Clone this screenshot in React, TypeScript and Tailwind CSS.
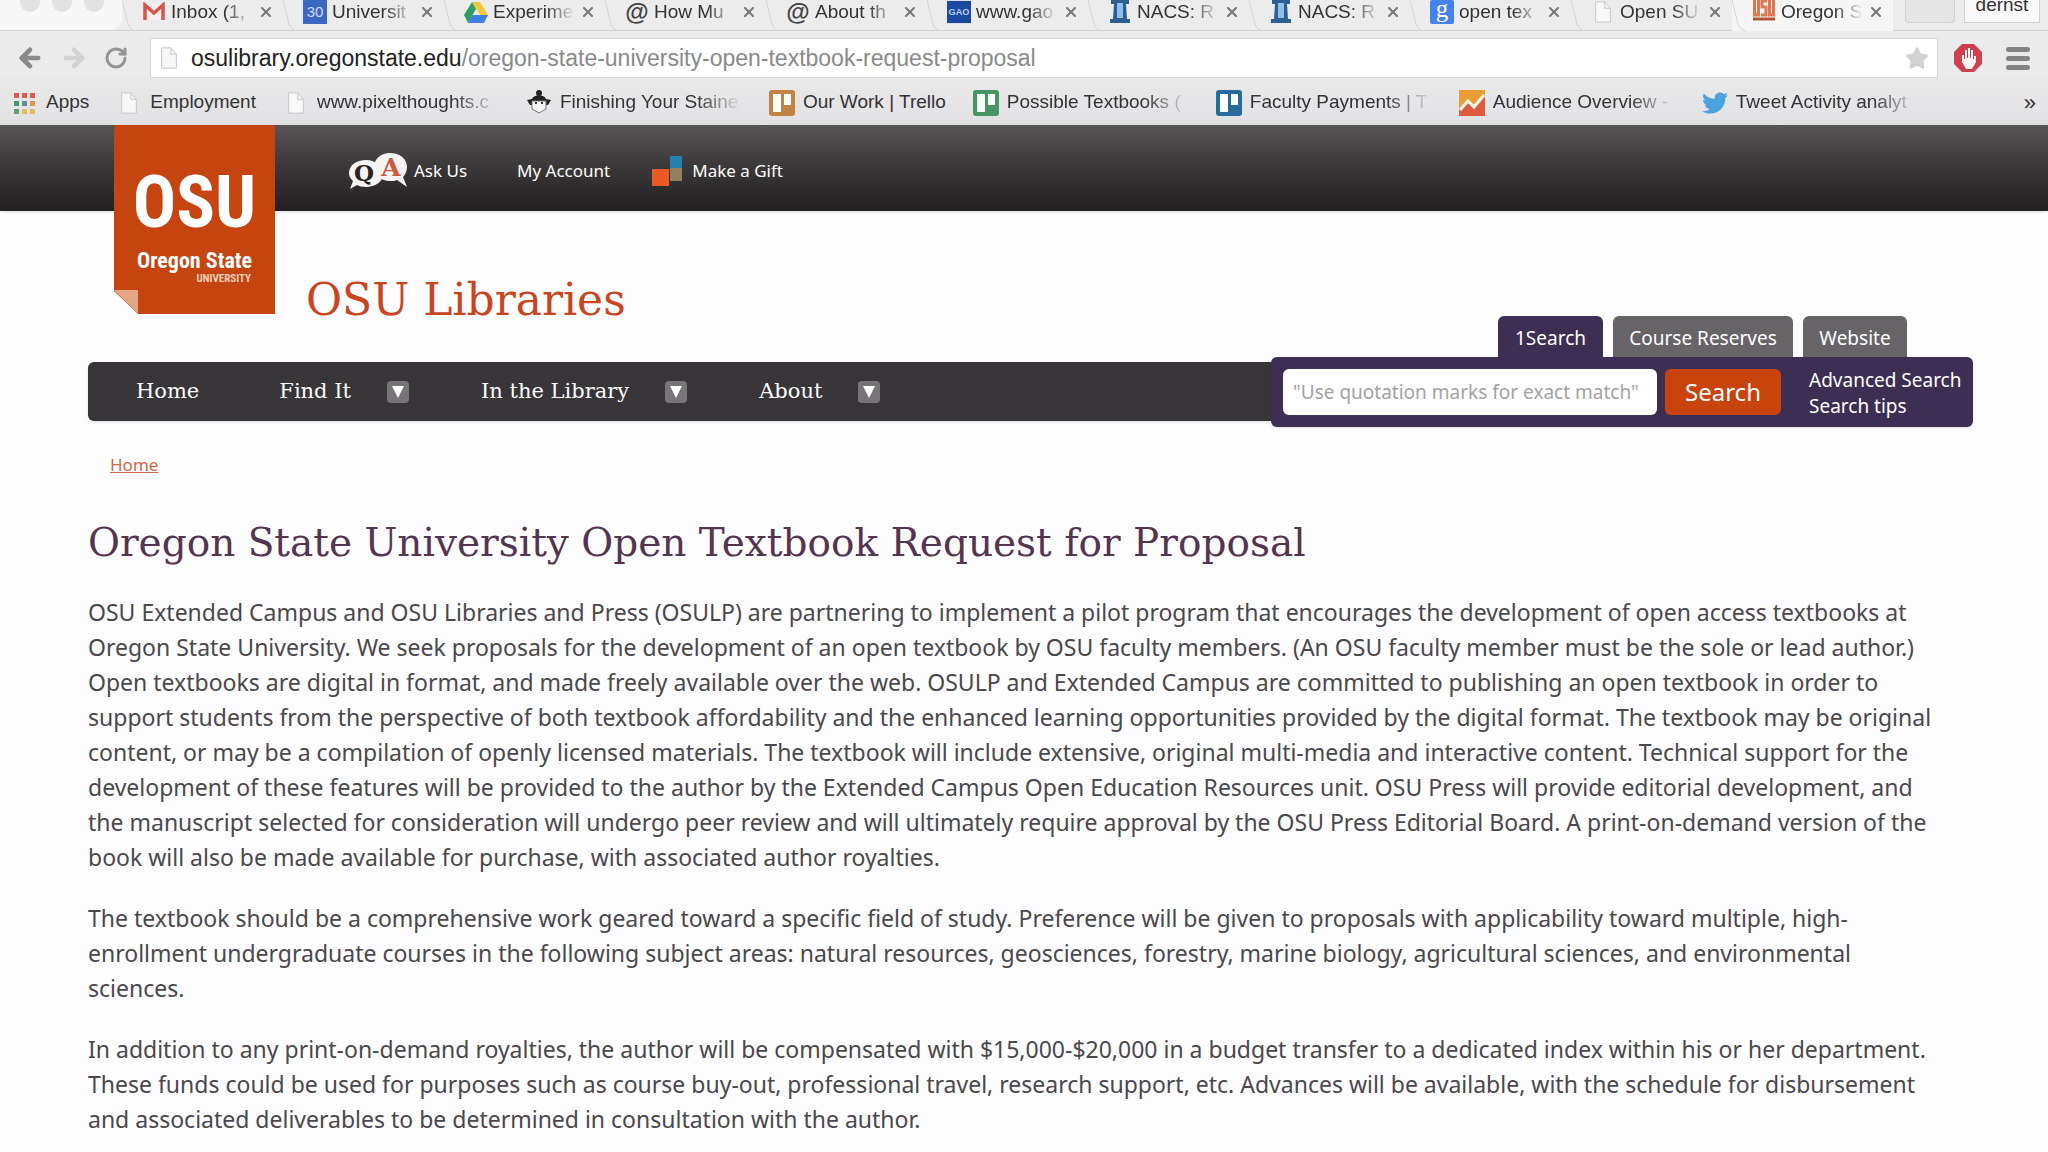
import React from "react";
import { FaTwitter, FaStar } from "react-icons/fa";
import { X, ArrowLeft, ArrowRight, RotateCw } from "lucide-react";

interface BrowserTab {
    title: string;
    icon: React.ReactNode;
    active?: boolean;
}

interface Bookmark {
    label: string;
    icon: React.ReactNode;
    faded?: boolean;
}

const PageIcon = () => (
    <svg viewBox="0 0 24 26" className="h-6 w-6">
        <path d="M4 2h10l6 7v15H4z" fill="#f7f7f7" stroke="#c4c4c4" />
        <path d="M14 2v7h6" fill="none" stroke="#c4c4c4" />
    </svg>
);

const GmailIcon = () => (
    <svg viewBox="0 0 24 18" className="h-5 w-6">
        <path d="M2 1h20v16H2z" fill="#f4f0f0" />
        <path d="M3 17V2l9 8 9-8v15" fill="none" stroke="#d5544c" strokeWidth="3.5" />
    </svg>
);

const CalendarIcon = () => (
    <svg viewBox="0 0 24 24" className="h-6 w-6">
        <rect width="24" height="24" fill="#3b67c4" />
        <text x="12" y="17" textAnchor="middle" fontSize="15" fill="#cfdcf7" fontFamily="Liberation Sans, sans-serif">30</text>
    </svg>
);

const DriveIcon = () => (
    <svg viewBox="0 0 24 22" className="h-6 w-6">
        <path d="M8 1h8l8 13h-8z" fill="#f6c73b" />
        <path d="M8 1l4 7-8 14-4-8z" fill="#2f9e63" />
        <path d="M8 14h16l-4 8H4z" fill="#3f7fe0" />
    </svg>
);

const AtIcon = () => (
    <span className="text-[24px] leading-6 font-bold text-[#444444]">@</span>
);

const GaoIcon = () => (
    <svg viewBox="0 0 26 24" className="h-6 w-[26px]">
        <rect width="26" height="24" fill="#1c49a0" />
        <text x="13" y="15" textAnchor="middle" fontSize="10" fontWeight="bold" fill="#b8cdf2" fontFamily="Liberation Sans, sans-serif">GAO</text>
    </svg>
);

const TowerIcon = () => (
    <svg viewBox="0 0 24 24" className="h-6 w-6">
        <path d="M3 0h18v4h-3l1 15h3v4H2v-4h3L6 4H3z" fill="#2d5f94" />
        <path d="M9 3h6v15H9z" fill="#8fc0ea" />
    </svg>
);

const GoogleIcon = () => (
    <svg viewBox="0 0 24 24" className="h-6 w-6">
        <rect width="24" height="24" rx="2" fill="#4483ee" />
        <text x="12" y="17" textAnchor="middle" fontSize="25" fill="#ffffff" fontFamily="Liberation Serif, serif">g</text>
    </svg>
);

const OsuIcon = () => (
    <svg viewBox="0 0 24 24" className="h-6 w-6">
        <g fill="none" stroke="#e0784c" strokeWidth="3">
            <rect x="2.5" y="-4" width="4" height="19" />
            <path d="M15 1h-5v6h4v8H9M17.500-4v19h4V-4" />
        </g>
        <path d="M1 19h22" stroke="#b0543a" strokeWidth="3" />
    </svg>
);

const AppsIcon = () => (
    <svg viewBox="0 0 26 26" className="h-[26px] w-[26px]">
        <path d="M2 3h5v5H2zM10 3h5v5h-5zM18 3h5v5h-5z" fill="#dd5a50" />
        <path d="M2 11h5v5H2z" fill="#46976a" />
        <path d="M10 11h5v5h-5z" fill="#5b90a0" />
        <path d="M18 11h5v5h-5z" fill="#d99a50" />
        <path d="M2 19h5v5H2z" fill="#5f9f6a" />
        <path d="M10 19h5v5h-5zM18 19h5v5h-5z" fill="#e2bb5c" />
    </svg>
);

const RobotIcon = () => (
    <svg viewBox="0 0 26 26" className="h-[26px] w-[26px]">
        <circle cx="13" cy="3" r="3" fill="#222222" />
        <path d="M1 10l5-1c2-5 12-5 14 0l5 1-3 5H4z" fill="#222222" />
        <path d="M6 11h14v8l-7 4-7-4z" fill="#f5f5f5" stroke="#777777" />
        <path d="M9 13h2M15 13h2" stroke="#333333" strokeWidth="2" />
    </svg>
);

const TrelloIcon = ({ color }: { color: string }) => (
    <svg viewBox="0 0 26 26" className="h-[26px] w-[26px]">
        <rect width="26" height="26" rx="3" fill={color} />
        <path d="M4 4h8v18H4zM15 4h7v11h-7z" fill="#fafffc" />
    </svg>
);

const AnalyticsIcon = () => (
    <svg viewBox="0 0 26 26" className="h-[26px] w-[26px]">
        <rect width="26" height="26" fill="#eb9d35" />
        <path d="M0 20l9-8 6 5L26 6v20H0z" fill="#dc5b3e" />
        <path d="M1 20l8-9 6 6L25 5" fill="none" stroke="#fff6ea" strokeWidth="3" />
    </svg>
);

const QaIcon = () => (
    <svg viewBox="0 0 60 38" className="h-[38px] w-[60px]">
        <path d="M18 8c9 0 17 6 17 14s-8 13-17 13c-4 0-7-1-9-2l-7 4 3-8C3 27 1 25 1 21 1 13 9 8 18 8z" fill="#f4f2f3" />
        <path d="M42 1c10 0 17 6 17 14 0 4-2 8-4 10l4 10-10-7c-2 1-4 1-7 1-9 0-16-6-16-14S33 1 42 1z" fill="#f4f2f3" />
        <text x="16" y="29" textAnchor="middle" fontSize="23" fontWeight="bold" fill="#262324" fontFamily="DejaVu Serif, serif">Q</text>
        <text x="43" y="24" textAnchor="middle" fontSize="25" fontWeight="bold" fill="#cb5a3c" fontFamily="DejaVu Serif, serif">A</text>
    </svg>
);

const GiftIcon = () => (
    <svg viewBox="0 0 32 32" className="h-8 w-8">
        <path d="M0 14h17v17H0z" fill="#ea5a24" />
        <path d="M18 1h12v12H18z" fill="#2480ad" />
        <path d="M18 13h12v13H18z" fill="#94805f" />
    </svg>
);

const StopHandIcon = () => (
    <svg viewBox="0 0 28 28" className="h-7 w-7">
        <path d="M8 0h12l8 8v12l-8 8H8l-8-8V8z" fill="#cf3f4d" />
        <path d="M8 11v7l4 7h6l4-7v-6h-2v3h-1V6h-2v8h-1V4h-2v10h-1V6h-2v9h-1v-4z" fill="#fff3f3" />
    </svg>
);

const browserTabs: BrowserTab[] = [
    { title: "Inbox (1,", icon: <GmailIcon /> },
    { title: "Universit", icon: <CalendarIcon /> },
    { title: "Experime", icon: <DriveIcon /> },
    { title: "How Mu", icon: <AtIcon /> },
    { title: "About th", icon: <AtIcon /> },
    { title: "www.gao", icon: <GaoIcon /> },
    { title: "NACS: R", icon: <TowerIcon /> },
    { title: "NACS: R", icon: <TowerIcon /> },
    { title: "open tex", icon: <GoogleIcon /> },
    { title: "Open SU", icon: <PageIcon /> },
    { title: "Oregon S", icon: <OsuIcon />, active: true },
];

const bookmarks: Bookmark[] = [
    { label: "Apps", icon: <AppsIcon /> },
    { label: "Employment", icon: <PageIcon /> },
    { label: "www.pixelthoughts.c", icon: <PageIcon />, faded: true },
    { label: "Finishing Your Staine", icon: <RobotIcon />, faded: true },
    { label: "Our Work | Trello", icon: <TrelloIcon color="#c08342" /> },
    { label: "Possible Textbooks (", icon: <TrelloIcon color="#459565" />, faded: true },
    { label: "Faculty Payments | T", icon: <TrelloIcon color="#276a9c" />, faded: true },
    { label: "Audience Overview -", icon: <AnalyticsIcon />, faded: true },
    { label: "Tweet Activity analyt", icon: <FaTwitter className="h-[26px] w-[26px] text-[#4aa3e0]" />, faded: true },
];

const paragraphs: string[] = [
    "OSU Extended Campus and OSU Libraries and Press (OSULP) are partnering to implement a pilot program that encourages the development of open access textbooks at Oregon State University. We seek proposals for the development of an open textbook by OSU faculty members. (An OSU faculty member must be the sole or lead author.) Open textbooks are digital in format, and made freely available over the web. OSULP and Extended Campus are committed to publishing an open textbook in order to support students from the perspective of both textbook affordability and the enhanced learning opportunities provided by the digital format. The textbook may be original content, or may be a compilation of openly licensed materials. The textbook will include extensive, original multi-media and interactive content. Technical support for the development of these features will be provided to the author by the Extended Campus Open Education Resources unit. OSU Press will provide editorial development, and the manuscript selected for consideration will undergo peer review and will ultimately require approval by the OSU Press Editorial Board. A print-on-demand version of the book will also be made available for purchase, with associated author royalties.",
    "The textbook should be a comprehensive work geared toward a specific field of study. Preference will be given to proposals with applicability toward multiple, high-enrollment undergraduate courses in the following subject areas: natural resources, geosciences, forestry, marine biology, agricultural sciences, and environmental sciences.",
    "In addition to any print-on-demand royalties, the author will be compensated with $15,000-$20,000 in a budget transfer to a dedicated index within his or her department. These funds could be used for purposes such as course buy-out, professional travel, research support, etc. Advances will be available, with the schedule for disbursement and associated deliverables to be determined in consultation with the author.",
];

const TabStrip = () => (
    <div className="flex h-[31px] items-start border-b border-[#d2d2d2] bg-[#ececec]">
        <div className="flex h-[30px] w-[122px] shrink-0 gap-3 rounded-br-xl bg-[#f7f7f7] pl-5">
            <span className="h-3 w-5 rounded-b-full bg-[#e2e2e2]" />
            <span className="h-3 w-5 rounded-b-full bg-[#e2e2e2]" />
            <span className="h-3 w-5 rounded-b-full bg-[#e2e2e2]" />
        </div>
        {browserTabs.map((tab, index) => (
            <div key={index} className={`flex h-[31px] w-[161px] shrink-0 ${tab.active ? "bg-[#f5f5f5]" : ""}`}>
                <svg viewBox="0 0 16 31" className="h-[31px] w-4 shrink-0">
                    <path d="M0 0l6 24q2 6 8 7" fill="none" stroke="#d4d4d4" />
                </svg>
                <div className="flex h-6 flex-1 items-center gap-[5px] pl-1">
                    <span className="flex w-6 shrink-0 justify-center">{tab.icon}</span>
                    <span className="w-[82px] text-[19px] leading-6 whitespace-nowrap [mask-image:linear-gradient(to_right,black_65%,transparent)]">{tab.title}</span>
                    <button aria-label={`Close ${tab.title}`} className="text-[#777777]">
                        <X className="h-4 w-4" strokeWidth={3} />
                    </button>
                </div>
            </div>
        ))}
        <button aria-label="New tab" className="ml-3 h-[23px] w-[50px] shrink-0 rounded-b border border-t-0 border-[#d2d2d2] bg-[#e6e6e6]" />
        <button className="mr-2 ml-auto flex h-[23px] w-[76px] shrink-0 items-end justify-center border border-t-0 border-[#cfcfcf] bg-[#f8f8f8] pb-[7px] text-[19px] leading-5">
            dernst
        </button>
    </div>
);

const Toolbar = () => (
    <div className="flex items-center bg-[#ebebeb] pt-[7px] pl-4">
        <div className="flex w-[134px] shrink-0 items-center gap-4">
            <button aria-label="Back" className="text-[#8a8a8a]"><ArrowLeft className="h-7 w-7" strokeWidth={4} /></button>
            <button aria-label="Forward" className="text-[#d2d2d2]"><ArrowRight className="h-7 w-7" strokeWidth={4} /></button>
            <button aria-label="Reload" className="text-[#959595]"><RotateCw className="h-6 w-6" strokeWidth={3} /></button>
        </div>
        <div className="flex h-10 flex-1 items-center gap-[10px] border border-[#d6d6d6] bg-white pr-2 pl-[6px]">
            <PageIcon />
            <div className="flex-1 text-[23px] whitespace-nowrap text-[#8a8a8a]">
                <span className="text-[#222222]">osulibrary.oregonstate.edu</span>/oregon-state-university-open-textbook-request-proposal
            </div>
            <button aria-label="Bookmark this page"><FaStar className="h-6 w-6 text-[#d2d2d2]" /></button>
        </div>
        <div className="flex w-[110px] shrink-0 items-center gap-6 pl-4">
            <button aria-label="Ad blocker"><StopHandIcon /></button>
            <button aria-label="Menu" className="flex w-6 flex-col gap-1">
                <span className="h-[5px] rounded bg-[#838383]" />
                <span className="h-[5px] rounded bg-[#838383]" />
                <span className="h-[5px] rounded bg-[#838383]" />
            </button>
        </div>
    </div>
);

const BookmarksBar = () => (
    <div className="flex h-[47px] items-center gap-[27px] bg-linear-to-b from-[#e9e9e9] to-[#e2e1e4] pt-[2px] pr-3 pl-3">
        {bookmarks.map((bookmark) => (
            <a key={bookmark.label} href="#" className="flex shrink-0 items-center gap-2">
                <span className="flex w-[26px] justify-center">{bookmark.icon}</span>
                <span className={`text-[19px] whitespace-nowrap ${bookmark.faded ? "w-[182px] [mask-image:linear-gradient(to_right,black_75%,transparent)]" : ""}`}>
                    {bookmark.label}
                </span>
            </a>
        ))}
        <button aria-label="More bookmarks" className="ml-auto text-[22px]">»</button>
    </div>
);

const SiteLogo = () => (
    <a href="#" aria-label="Oregon State University" className="relative z-10 flex h-[189px] w-[161px] shrink-0 flex-col items-center bg-[#c5440f] pt-8 font-['Roboto_Condensed','Liberation_Sans_Narrow',sans-serif] font-bold [clip-path:polygon(0_0,100%_0,100%_100%,24px_100%,0_166px)]">
        <span className="text-[72px] leading-[92px]">OSU</span>
        <span className="text-[22px] leading-6">Oregon State</span>
        <span className="self-end pr-6 text-[11px] leading-3 text-[#f3cdb8]">UNIVERSITY</span>
        <svg viewBox="0 0 24 24" className="absolute bottom-0 left-0 h-6 w-6">
            <path d="M0 0h24v24z" fill="#e3a584" />
        </svg>
    </a>
);

const SiteHeader = () => (
    <header className="flex h-[86px] items-start bg-linear-to-b from-[#575556] via-[#3a3738] to-[#221f20] pl-[114px] text-[17px] text-white shadow-sm">
        <SiteLogo />
        <div className="flex h-[86px] items-center pt-2 pb-[2px] pl-[73px]">
            <a href="#" className="flex items-center gap-[6px]"><QaIcon />Ask Us</a>
            <a href="#" className="ml-[50px]">My Account</a>
            <a href="#" className="ml-[42px] flex items-center gap-2"><GiftIcon />Make a Gift</a>
        </div>
    </header>
);

const MenuArrow = ({ label }: { label: string }) => (
    <button aria-label={label} className="ml-9 flex h-[22px] w-[22px] items-center justify-center rounded-sm bg-[#777577]">
        <svg viewBox="0 0 12 12" className="h-3 w-3"><path d="M0 0h12L6 12z" fill="#ffffff" /></svg>
    </button>
);

const MainNav = () => (
    <nav className="flex h-[59px] items-center rounded-l-md bg-[#383538] pl-12 font-['DejaVu_Serif',serif] text-[21px] text-white shadow-sm">
        <a href="#">Home</a>
        <a href="#" className="ml-20">Find It</a>
        <MenuArrow label="Open Find It menu" />
        <a href="#" className="ml-[72px]">In the Library</a>
        <MenuArrow label="Open In the Library menu" />
        <a href="#" className="ml-[72px]">About</a>
        <MenuArrow label="Open About menu" />
    </nav>
);

const SearchPanel = () => (
    <div className="w-[702px] shrink-0 text-[19px] text-white">
        <div className="flex justify-end gap-[10px] pr-[66px]">
            <button className="h-[41px] w-[105px] rounded-t-md bg-[#3d2e54] pt-[3px]">1Search</button>
            <button className="h-[41px] w-[180px] rounded-t-md bg-[#666467] pt-[3px]">Course Reserves</button>
            <button className="h-[41px] w-[104px] rounded-t-md bg-[#666467] pt-[3px]">Website</button>
        </div>
        <form className="flex h-[70px] items-center rounded-md bg-[#3d2e54] pl-3 shadow-sm">
            <input type="text" aria-label="Search the library" placeholder={"\"Use quotation marks for exact match\""} className="h-[46px] w-[374px] rounded-md bg-white px-[10px] text-[19px] text-[#333333] placeholder:text-[#a3a3a3]" />
            <button type="button" className="ml-2 h-[46px] w-[116px] rounded-md bg-[#c9430c] text-[24px]">Search</button>
            <div className="ml-7 flex flex-col pt-[2px] leading-[26px]">
                <a href="#">Advanced Search</a>
                <a href="#">Search tips</a>
            </div>
        </form>
    </div>
);

export default function App() {
    return (
        <div className="min-h-screen bg-[#fdfcfe] font-['Liberation_Sans',Arial,sans-serif] text-[#333333]">
            <TabStrip />
            <Toolbar />
            <BookmarksBar />
            <div className="font-['Noto_Sans',sans-serif]">
                <SiteHeader />
                <main className="pr-[75px] pl-[88px]">
                    <div className="flex items-end">
                        <div className="mb-[6px] flex-1">
                            <div className="pt-[61px] pb-[34px] pl-[218px] font-['DejaVu_Serif',serif] text-[44px] leading-[56px] text-[#c9451f]">OSU Libraries</div>
                            <MainNav />
                        </div>
                        <SearchPanel />
                    </div>
                    <div className="pt-6 pl-[22px] text-[17px] leading-7">
                        <a href="#" className="text-[#cf6a48] underline">Home</a>
                    </div>
                    <h1 className="mt-9 font-['DejaVu_Serif',serif] text-[39px] leading-[56px] text-[#543551]">
                        Oregon State University Open Textbook Request for Proposal
                    </h1>
                    <div className="mt-6 flex flex-col gap-[26px] pr-[35px] text-[23px] leading-[35px] text-[#4a484b]">
                        {paragraphs.map((text, index) => (
                            <p key={index}>{text}</p>
                        ))}
                    </div>
                </main>
            </div>
        </div>
    );
}
